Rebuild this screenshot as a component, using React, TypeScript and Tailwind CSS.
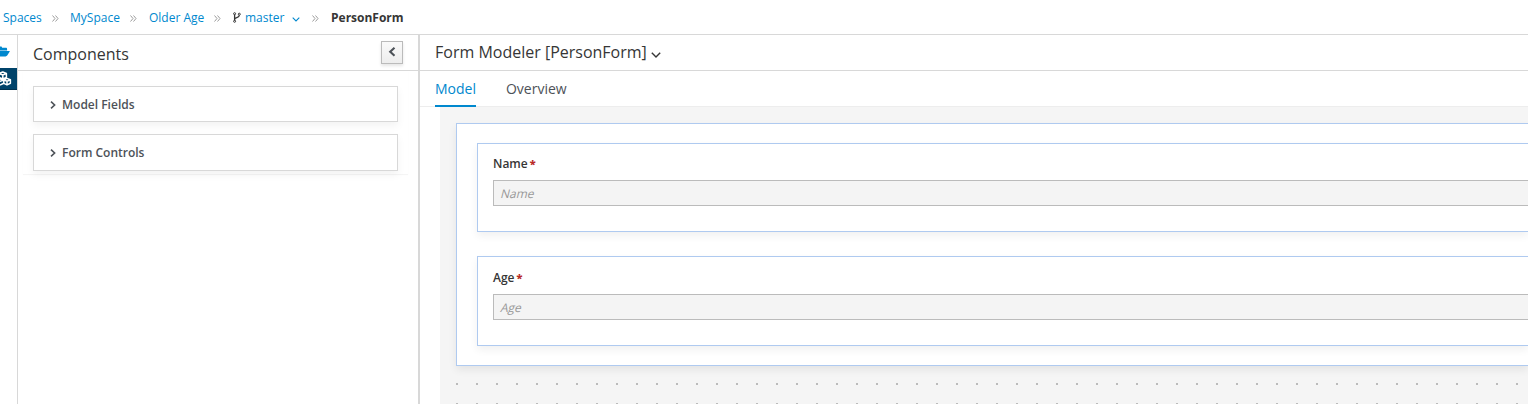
import type { ReactNode } from "react";

function Chevron({ className, d, w, h, sw = 1.5 }: { className?: string; d: string; w: number; h: number; sw?: number }) {
  return (
    <svg className={`shrink-0 ${className ?? ""}`} width={w} height={h} viewBox={`0 0 ${w} ${h}`} fill="none" stroke="currentColor" strokeWidth={sw}>
      <path d={d} />
    </svg>
  );
}

function Separator({ className }: { className: string }) {
  return (
    <svg className={`h-[7px] w-[7px] shrink-0 text-[#9c9c9c] ${className}`} viewBox="0 0 7 7" fill="none" stroke="currentColor" strokeWidth="1">
      <path d="M0.5 0.5 3 3.5 0.5 6.5M3.5 0.5 6 3.5 3.5 6.5" />
    </svg>
  );
}

function Breadcrumbs() {
  return (
    <nav className="flex h-[35px] shrink-0 items-center border-b border-[#d8d8d8] pl-[3px] pt-[2px] text-[12px] text-[#0088ce]">
      <a className="w-[39px] whitespace-nowrap">Spaces</a>
      <Separator className="ml-[10px] mr-[11px]" />
      <a className="w-[50px] whitespace-nowrap">MySpace</a>
      <Separator className="ml-[10px] mr-[12px]" />
      <a className="w-[55px] whitespace-nowrap">Older Age</a>
      <Separator className="ml-[10px] mr-[12px]" />
      <svg className="-mt-px h-[11px] w-[8px] shrink-0 text-[#363636]" viewBox="0 0 8 11" fill="none" stroke="currentColor">
        <circle cx="1.6" cy="1.7" r="1" />
        <circle cx="1.6" cy="9.3" r="1" />
        <circle cx="6.3" cy="2.2" r="1" />
        <path d="M1.6 2.5v6M6.3 3.2c0 3-4.5 2-4.7 4.3" strokeWidth="1.3" />
      </svg>
      <a className="ml-1 w-[40px] whitespace-nowrap">master</a>
      <Chevron className="ml-[7px] mt-[3px]" w={8} h={5} d="M0.7 0.7 4 4 7.3 0.7" sw={1.1} />
      <Separator className="ml-[12px] mr-[12px]" />
      <span className="font-bold text-[#363636]">PersonForm</span>
    </nav>
  );
}

function Rail() {
  return (
    <aside className="w-[18px] shrink-0 overflow-hidden border-r border-[#d8d8d8]">
      <div className="flex h-[33px] items-center">
        <svg className="h-[12px] w-[10px] text-[#0088ce]" viewBox="0 0 10 12" fill="currentColor">
          <path d="M0 0.5h1.5l.7 1.3h4q.9 0 .9 1.4V4.4H0zM0 5h9.3q.9 0 .3.8L7.2 9.6q-.5.8-1.6.8H0z" />
        </svg>
      </div>
      <div className="flex h-[22px] items-center border-b border-[#00304d] bg-[#00436a]">
        <svg className="h-[15px] w-[12px] text-white" viewBox="0 0 12 15" fill="none" stroke="currentColor" strokeWidth="1.5" strokeLinejoin="round">
          <path d="M-1 2.4 2.8 1 6.4 2.4v4L2.8 8-1 6.5zM-1 2.4 2.8 4 6.4 2.4M2.8 4v4M3.8 8.7 7 7.4l3.4 1.3v3.6L7 13.9l-3.2-1.6zM3.8 8.7 7 10.2l3.4-1.5M7 10.2v3.7M-2 8.5 0 8l3.8 1.1M-2 10 0 10.4 3.8 9M0 14l3.8-1.7" />
        </svg>
      </div>
    </aside>
  );
}

function Accordion({ label, className }: { label: string; className: string }) {
  return (
    <div className={`flex items-center border border-[#d8d8d8] bg-white pl-4 shadow-[0_4px_8px_rgba(0,0,0,0.05)] ${className}`}>
      <Chevron className="mt-px text-[#4d5258]" w={6} h={8} d="M1 0.7 4.6 4 1 7.3" sw={1.6} />
      <span className="ml-[6px] text-[12px] font-semibold leading-[18px] text-[#4d5258]">{label}</span>
    </div>
  );
}

function ComponentsPanel() {
  return (
    <section className="w-[402px] shrink-0 border-r-2 border-[#d8d8d8]">
      <header className="flex h-[36px] items-center justify-between border-b border-[#d8d8d8] pl-[15px] pr-[15px]">
        <h2 className="mt-0.5 text-[16px] text-[#363636]">Components</h2>
        <button className="-mt-px flex h-[23px] w-[22px] items-center justify-center border border-[#bbb] bg-linear-to-b from-[#fafafa] to-[#ededed] text-[#4d5258] shadow-[0_2px_3px_rgba(3,3,3,0.1)]">
          <Chevron w={8} h={10} d="M6.5 0.8 2.2 4.8 6.5 8.8" sw={2.1} />
        </button>
      </header>
      <div className="ml-[5px] mr-[10px] px-[10px] pb-[3px] pt-[15px] shadow-[0_1px_1px_rgba(0,0,0,0.04)]">
        <Accordion label="Model Fields" className="h-[36px] pt-px" />
        <Accordion label="Form Controls" className="mt-3 h-[37px]" />
      </div>
    </section>
  );
}

function Field({ label, className, labelClassName }: { label: string; className: string; labelClassName: string }) {
  return (
    <div className={`border border-r-0 border-[#afcaf0] bg-white pl-[15px] shadow-[0_4px_8px_rgba(3,3,3,0.06)] ${className}`}>
      <label className={`flex text-[12px] font-semibold leading-[18px] text-[#363636] ${labelClassName}`}>
        {label}
        <span className="ml-0.5 text-[11px] font-extrabold text-[#b92c28]">*</span>
      </label>
      <div className="flex h-[26px] items-center border border-r-0 border-[#bbb] bg-[#f4f4f4] pl-[7px] pt-px text-[12px] leading-[18px] text-[#999]">
        <span className="-skew-x-[14deg]">{label}</span>
      </div>
    </div>
  );
}

function Tab({ active, children }: { active?: boolean; children: ReactNode }) {
  return (
    <button className={`relative flex h-[36px] items-center pb-0.5 text-[14px] ${active ? "text-[#0088ce]" : "text-[#4d5258]"}`}>
      {children}
      {active && <span className="absolute inset-x-0 bottom-0 h-[2px] bg-[#0088ce]" />}
    </button>
  );
}

function Editor() {
  return (
    <main className="flex min-w-0 flex-1 flex-col overflow-hidden">
      <header className="flex h-[36px] shrink-0 items-center border-b border-[#d8d8d8] pl-[15px] text-[16px] text-[#363636]">
        <h1 className="-mt-0.5">Form Modeler [PersonForm]</h1>
        <Chevron className="ml-1 mt-1" w={10} h={6} d="M0.8 0.8 5 5 9.2 0.8" sw={1.4} />
      </header>
      <div className="flex h-[36px] shrink-0 gap-[30px] border-b border-[#ededed] pl-[15px]">
        <Tab active>Model</Tab>
        <Tab>Overview</Tab>
      </div>
      <div className="ml-[20px] flex flex-1 flex-col bg-[#f5f5f5] pl-4 pt-4">
        <div className="h-[243px] shrink-0 border border-r-0 border-[#afcaf0] bg-white pl-[20px] pt-[19px] shadow-[0_4px_8px_rgba(3,3,3,0.07)]">
          <Field label="Name" className="h-[89px]" labelClassName="h-[36px] pt-[11px]" />
          <Field label="Age" className="mt-6 h-[90px]" labelClassName="h-[37px] pt-[12px]" />
        </div>
        <svg className="mt-[17px] w-full flex-1">
          <defs>
            <pattern id="dots" width="20" height="20" patternUnits="userSpaceOnUse">
              <rect width="2" height="2" fill="#bbb" />
            </pattern>
          </defs>
          <rect width="100%" height="100%" fill="url(#dots)" />
        </svg>
      </div>
    </main>
  );
}

export default function App() {
  return (
    <div className="flex h-[404px] w-full flex-col overflow-hidden bg-white font-['Open_Sans',sans-serif]">
      <Breadcrumbs />
      <div className="flex min-h-0 flex-1">
        <Rail />
        <ComponentsPanel />
        <Editor />
      </div>
    </div>
  );
}
